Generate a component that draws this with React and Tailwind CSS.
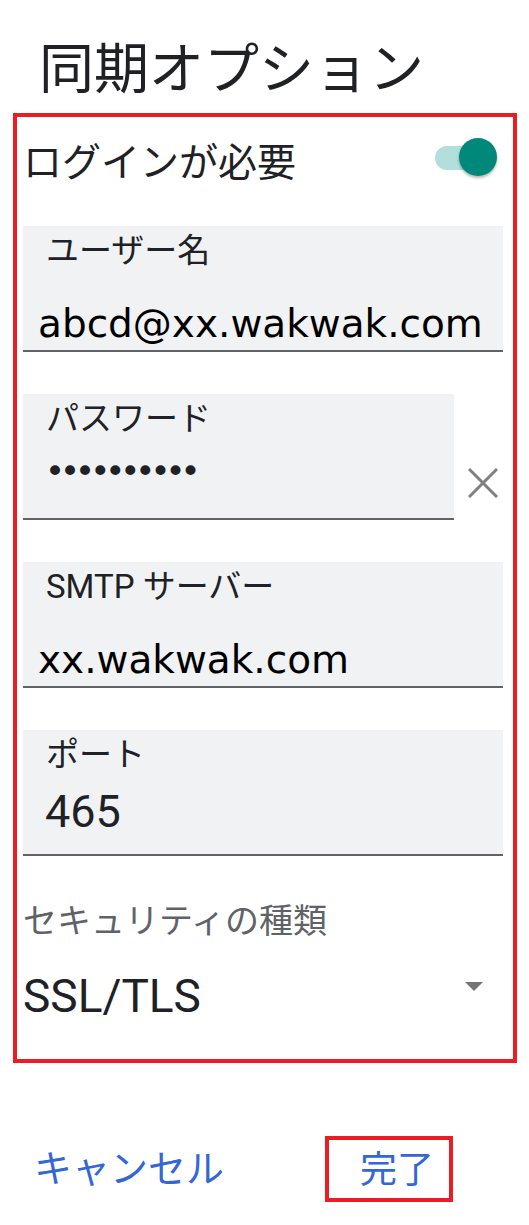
import React from "react";

function Field({ label, children, className = "" }) {
  return (
    <div className={"bg-[#f1f2f4] h-[126px] border-b-2 border-[#5f6368] flex flex-col " + className}>
      <div className="pl-[23px] pt-[8px] text-[33px] leading-none text-[#202124] font-['Roboto','Noto_Sans_CJK_JP',sans-serif]">
        {label}
      </div>
      {children}
    </div>
  );
}

export default function App() {
  return (
    <div className="w-[529px] h-[1225px] bg-white overflow-hidden font-['Roboto','Noto_Sans_CJK_JP',sans-serif]">
      <div className="pl-[39px] pt-[37px] text-[55px] leading-none text-[#202124] font-['Noto_Sans_CJK_JP',sans-serif]">
        同期オプション
      </div>

      <div className="mt-[21px] ml-[13px] w-[504px] h-[950px] border-4 border-[#ec1c24] pl-[6px] pr-[10px] flex flex-col">
        <div className="h-[109px] flex items-start shrink-0">
          <div className="mt-[23px] text-[39px] leading-none text-[#202124] font-['Noto_Sans_CJK_JP',sans-serif]">
            ログインが必要
          </div>
          <div className="ml-auto mr-[6px] mt-[21px] w-[62px] h-[38px] relative">
            <div className="absolute left-0 top-[8px] w-[53px] h-[24px] rounded-full bg-[#b2dfdb]" />
            <div className="absolute right-0 top-0 w-[38px] h-[38px] rounded-full bg-[#00897b] shadow-[0_2px_3px_rgba(0,0,0,0.3)]" />
          </div>
        </div>

        <Field label="ユーザー名">
          <div className="mt-[37px] pl-[15px] text-[39px] leading-none text-black font-['DejaVu_Sans',sans-serif]">
            abcd@xx.wakwak.com
          </div>
        </Field>

        <div className="mt-[42px] flex items-start">
          <Field label="パスワード" className="w-[431px]">
            <div className="mt-[19px] pl-[22px] text-[34px] leading-none tracking-[-5px] text-[#202124] font-['DejaVu_Sans',sans-serif]">
              ••••••••••
            </div>
          </Field>
          <svg className="ml-[14px] mt-[74px]" width="30" height="30" viewBox="0 0 30 30">
            <path d="M1 1 L29 29 M29 1 L1 29" stroke="#808080" strokeWidth="3" fill="none" />
          </svg>
        </div>

        <Field label="SMTP サーバー" className="mt-[42px]">
          <div className="mt-[37px] pl-[15px] text-[39px] leading-none text-black font-['DejaVu_Sans',sans-serif]">
            xx.wakwak.com
          </div>
        </Field>

        <Field label="ポート" className="mt-[42px]">
          <div className="mt-[18px] pl-[22px] text-[45px] leading-none text-[#202124] font-['Roboto',sans-serif]">
            465
          </div>
        </Field>

        <div className="mt-[46px] text-[34px] leading-none text-[#5f6368] font-['Noto_Sans_CJK_JP',sans-serif]">
          セキュリティの種類
        </div>
        <div className="mt-[37px] flex items-start">
          <div className="text-[46px] leading-none text-[#202124] font-['Roboto',sans-serif]">SSL/TLS</div>
          <svg className="ml-auto mr-[20px] mt-[9px]" width="18" height="9" viewBox="0 0 18 9">
            <path d="M0 0 L18 0 L9 9 Z" fill="#757575" />
          </svg>
        </div>
      </div>

      <div className="mt-[73px] flex items-start">
        <div className="ml-[34px] mt-[11px] text-[38px] leading-none text-[#3367d6] font-['Noto_Sans_CJK_JP',sans-serif]">
          キャンセル
        </div>
        <div className="ml-[101px] w-[128px] h-[66px] border-4 border-[#ec1c24] pl-[31px] pt-[9px]">
          <div className="text-[37px] leading-none text-[#3367d6] font-['Noto_Sans_CJK_JP',sans-serif]">完了</div>
        </div>
      </div>
    </div>
  );
}
